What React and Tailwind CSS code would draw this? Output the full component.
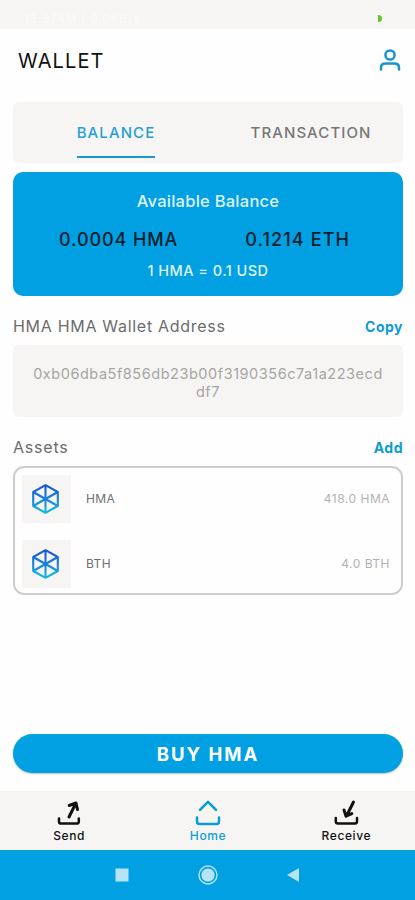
const HexLogo = ({ id }) => (
  <svg width="27" height="30" viewBox="0 0 27 30" fill="none">
    <defs>
      <linearGradient id={id} x1="0" y1="0" x2="0" y2="30" gradientUnits="userSpaceOnUse">
        <stop offset="0" stopColor="#1454cf" />
        <stop offset="0.5" stopColor="#1b80dc" />
        <stop offset="1" stopColor="#10c0df" />
      </linearGradient>
    </defs>
    <path
      d="M13.5 1.2 25.8 8V22L13.5 28.8 1.2 22V8ZM13.51 1.2 13.5 28.8M1.2 8 25.8 22M25.8 8 1.2 22"
      stroke={`url(#${id})`}
      strokeWidth="2.1"
      strokeLinejoin="round"
    />
  </svg>
);

const Asset = ({ id, name, amount }) => (
  <div className="flex h-12 items-center">
    <div className="flex h-12 w-[49px] shrink-0 items-center justify-center bg-[#f6f5f4] pr-[2px] pb-px">
      <HexLogo id={id} />
    </div>
    <span className="ml-[15px] text-[12px] tracking-[0.4px] text-[#6f6f6f]">{name}</span>
    <span className="ml-auto text-[12px] tracking-[0.5px] text-[#b2b2b2]">{amount}</span>
  </div>
);

const NavItem = ({ label, arrow, tray, weight, className }) => (
  <div className={`flex flex-col items-center ${className}`}>
    <svg width="28" height="28" viewBox="0 0 28 28" fill="none" stroke="currentColor" strokeLinecap="round" strokeLinejoin="round">
      <path d={arrow} strokeWidth={weight} />
      <path d={tray} strokeWidth="2.5" />
    </svg>
    <span className="mt-px text-[12px] leading-[15px] font-medium tracking-[0.6px]">{label}</span>
  </div>
);

export default function App() {
  return (
    <div className="flex h-[900px] w-[415px] flex-col overflow-hidden bg-[#fefefe] font-['Inter',sans-serif]">
      <div className="flex h-[29px] items-center bg-[#f6f5f4] pt-2 pr-[33px] pl-6 text-[12px] text-[#fbfafa]">
        <span className="tracking-[0.8px]">12:57AM | 0.0KB/s</span>
        <span className="ml-auto h-[7px] w-[4px] rounded-r-sm bg-[#62c62e]" />
      </div>

      <header className="flex h-[73px] items-center justify-between pr-[14px] pb-[10px] pl-[18px]">
        <h1 className="text-[20px] leading-6 tracking-[1.1px] text-[#111]">WALLET</h1>
        <svg width="22" height="24" viewBox="0 0 22 24" fill="none" stroke="#1594cf" strokeWidth="2.5" strokeLinecap="round">
          <circle cx="11" cy="6" r="4.6" />
          <path d="M2 20.5V18.7Q2 14.5 6.5 14.5H15.5Q20 14.5 20 18.7V20.5" />
        </svg>
      </header>

      <main className="flex flex-1 flex-col pr-[12px] pl-[13px]">
        <div className="grid h-[61px] grid-cols-2 rounded-md bg-[#f6f5f4] text-[15px] font-medium tracking-[1.1px]">
          <div className="flex justify-center pl-[11px]">
            <span className="mt-[21px] h-[35px] border-b-[2.5px] border-[#1a97cd] leading-[20px] text-[#279fd2]">BALANCE</span>
          </div>
          <div className="flex justify-center pl-[11px]">
            <span className="mt-[21px] leading-[20px] text-[#777]">TRANSACTION</span>
          </div>
        </div>

        <section className="mt-[9px] flex h-[124px] flex-col items-center rounded-[10px] bg-[#00a0e2]">
          <p className="mt-[19px] text-[16.5px] leading-5 font-medium tracking-[0.25px] text-[#dff4fc]">Available Balance</p>
          <div className="mt-[18px] flex w-full justify-between pr-[53px] pl-[46px] text-[18px] leading-[22px] font-medium tracking-[0.9px] text-[#04202e]">
            <span>0.0004 HMA</span>
            <span className="tracking-[1.1px]">0.1214 ETH</span>
          </div>
          <p className="mt-[11px] text-[14.5px] leading-[18px] font-medium tracking-[0.45px] text-[#dff4fc]">1 HMA = 0.1 USD</p>
        </section>

        <div className="mt-[19px] flex h-[22px] items-center justify-between">
          <h2 className="text-[16px] tracking-[0.7px] text-[#6c6c6c]">HMA HMA Wallet Address</h2>
          <button className="text-[14px] font-bold tracking-[0.5px] text-[#0c9cd6]">Copy</button>
        </div>

        <div className="mt-[8px] h-[72px] rounded-md bg-[#f6f5f4] pt-[20px] text-center text-[14.5px] leading-[18px] tracking-[0.54px] text-[#a5a5a5]">
          0xb06dba5f856db23b00f3190356c7a1a223ecd
          <br />
          df7
        </div>

        <div className="mt-[19px] flex h-[22px] items-center justify-between">
          <h2 className="text-[16px] tracking-[0.8px] text-[#6c6c6c]">Assets</h2>
          <button className="text-[14px] font-bold tracking-[0.5px] text-[#0c9cd6]">Add</button>
        </div>

        <div className="mt-[8px] flex h-[129px] flex-col gap-[17px] rounded-[11px] border-2 border-[#cdcdcd] pt-[7px] pr-[11px] pl-[7px]">
          <Asset id="hma" name="HMA" amount="418.0 HMA" />
          <Asset id="bth" name="BTH" amount="4.0 BTH" />
        </div>

        <button className="mt-auto mb-[18px] h-[39px] rounded-full bg-[#00a0e2] pt-[2px] text-[18.5px] font-bold tracking-[2px] text-white shadow-[0_1px_2px_rgba(0,0,0,0.25)]">
          BUY HMA
        </button>
      </main>

      <nav className="grid h-[59px] grid-cols-3 bg-[#f6f5f4] pt-[8px] text-[#111]">
        <NavItem
          label="Send"
          weight="3"
          arrow="M14 18 20.5 4.8M14.2 6.5 21 4 22.5 10.5"
          tray="M4 19.5V22.5Q4 24.6 6.2 24.6H21.6Q23.8 24.6 23.8 22.5V19.5"
          className=""
        />
        <NavItem
          label="Home"
          weight="2.6"
          arrow="M6 10.8 14 2.8 22 10.8"
          tray="M3 18.5V22.4Q3 24.9 5.5 24.9H22.5Q25 24.9 25 22.4V18.5"
          className="pl-px text-[#0d9bd3]"
        />
        <NavItem
          label="Receive"
          weight="3"
          arrow="M21.5 3 15 16M12 11 14 17.2 19.8 14.6"
          tray="M3.8 19V22.3Q3.8 24.6 6 24.6H22.8Q25 24.6 25 22.3V19"
          className="pl-px"
        />
      </nav>

      <div className="flex h-[50px] items-center justify-center bg-[#00a0e2]">
        <svg width="190" height="22" viewBox="0 0 190 22" fill="#b6e4f7">
          <rect x="2.5" y="4.5" width="13" height="13" />
          <circle cx="95" cy="11" r="9" fill="none" stroke="#b6e4f7" strokeWidth="1.4" />
          <circle cx="95" cy="11" r="6.6" />
          <path d="M186 4V18L174 11Z" />
        </svg>
      </div>
    </div>
  );
}
